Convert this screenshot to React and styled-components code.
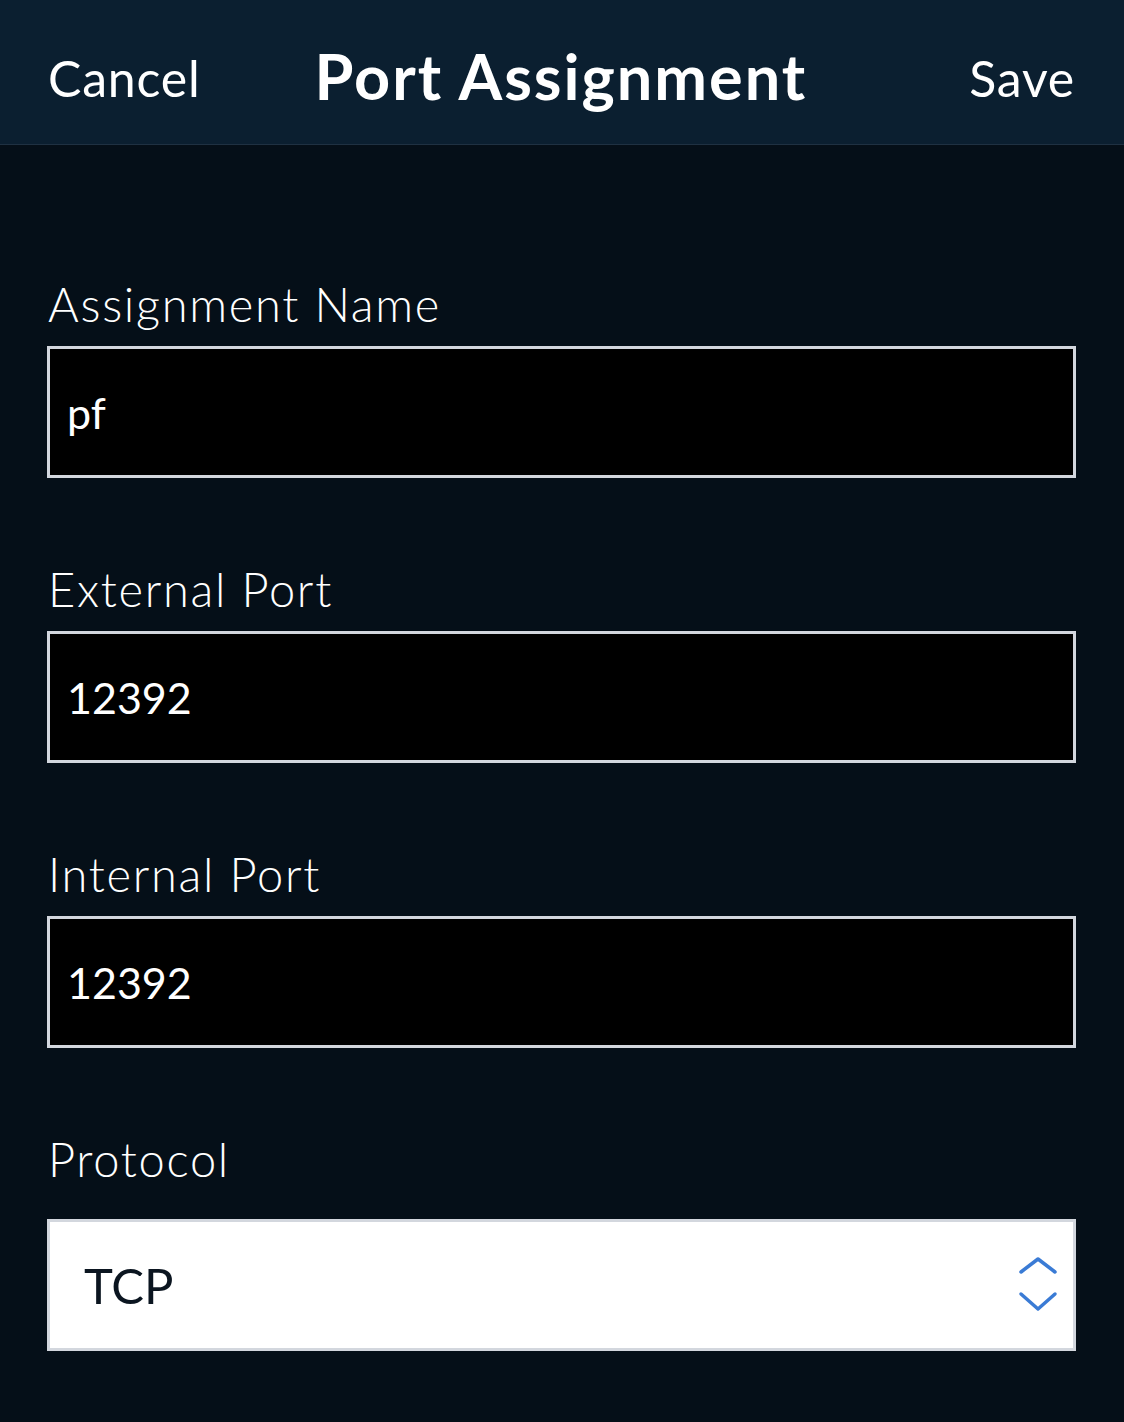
import styled, {createGlobalStyle} from 'styled-components'

const GlobalStyle = createGlobalStyle`
  html, body {
    margin: 0;
    padding: 0;
    background-color: #050f18;
  }
  body {
    font-family: Lato, "Noto Sans", sans-serif;
  }
`

const Page = styled.div`
  width: 1124px;
  min-height: 1422px;
  background-color: #050f18;
  color: #ffffff;
`
const NavHeader = styled.header`
  height: 145px;
  box-sizing: border-box;
  background-color: #0b1f30;
  border-bottom: 1px solid #1f3142;
  display: flex;
  align-items: flex-start;
  padding: 0 49px 0 48px;
`
const NavButton = styled.button`
  background: none;
  border: none;
  padding: 0;
  margin-top: 53px;
  margin-left: ${props => (props.right ? 'auto' : '0')};
  color: #ffffff;
  font-family: inherit;
  font-size: 50px;
  line-height: 1;
  letter-spacing: 0.8px;
  cursor: pointer;
`
const Title = styled.h1`
  margin: 44px 0 0 114px;
  font-size: 63px;
  font-weight: 700;
  line-height: 1;
  letter-spacing: 2px;
`
const Form = styled.form`
  display: flex;
  flex-direction: column;
  gap: 88px;
  padding: 136px 48px 0 47px;
`
const Field = styled.div`
  display: flex;
  flex-direction: column;
  gap: ${props => props.gap}px;
`
const Label = styled.label`
  font-size: 47px;
  line-height: 1;
  font-weight: 300;
  letter-spacing: 1.7px;
  padding-left: 1px;
`
const TextInput = styled.div`
  height: 132px;
  box-sizing: border-box;
  border: 3px solid #d3d7de;
  background-color: #000000;
  display: flex;
  align-items: center;
  padding-left: 17px;
  font-size: 43px;
  color: #ffffff;
`
const SelectBox = styled.div`
  height: 132px;
  box-sizing: border-box;
  border: 3px solid #d3d7de;
  background-color: #ffffff;
  display: flex;
  align-items: center;
  justify-content: space-between;
  padding: 0 15px 0 34px;
  font-size: 49px;
  color: #0b1520;
`

const SortIcon = () => (
  <svg width="40" height="56" viewBox="0 0 40 56" fill="none">
    <path
      d="M3 15 L20 2 L37 15"
      stroke="#3a7bd5"
      strokeWidth="3.5"
      strokeLinecap="round"
      strokeLinejoin="round"
    />
    <path
      d="M3 37 L20 52 L37 37"
      stroke="#3a7bd5"
      strokeWidth="3.5"
      strokeLinecap="round"
      strokeLinejoin="round"
    />
  </svg>
)

const fields = [
  {label: 'Assignment Name', value: 'pf'},
  {label: 'External Port', value: '12392'},
  {label: 'Internal Port', value: '12392'},
]

const App = () => (
  <Page>
    <GlobalStyle />
    <NavHeader>
      <NavButton type="button">Cancel</NavButton>
      <Title>Port Assignment</Title>
      <NavButton type="button" right>
        Save
      </NavButton>
    </NavHeader>
    <Form>
      {fields.map(item => (
        <Field key={item.label} gap={18}>
          <Label>{item.label}</Label>
          <TextInput>{item.value}</TextInput>
        </Field>
      ))}
      <Field gap={36}>
        <Label>Protocol</Label>
        <SelectBox>
          <span>TCP</span>
          <SortIcon />
        </SelectBox>
      </Field>
    </Form>
  </Page>
)

export default App
